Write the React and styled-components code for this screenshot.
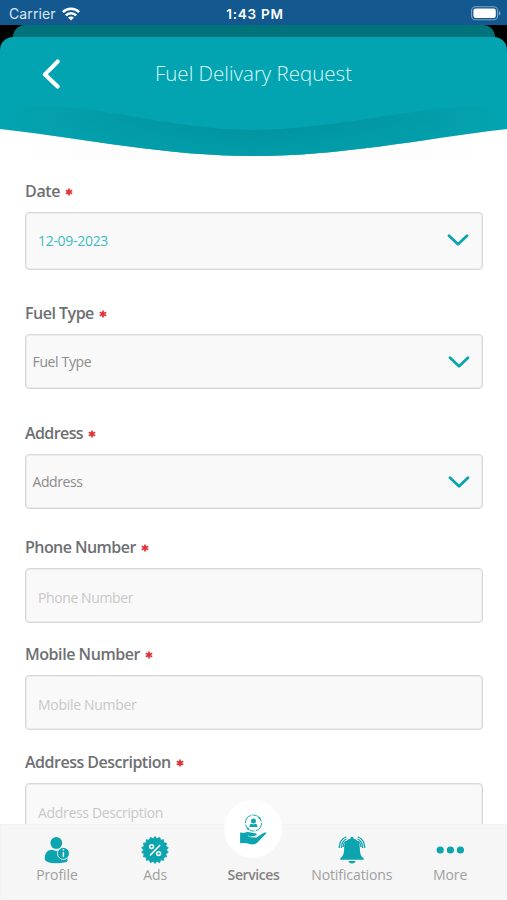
import React from 'react';
import styled, { createGlobalStyle } from 'styled-components';

const FIELDS = [
  { label: 'Date', value: '12-09-2023', kind: 'date', height: 58, gap: 33, spacing: -0.35, valueSpacing: -0.3 },
  { label: 'Fuel Type', value: 'Fuel Type', kind: 'select', height: 55, gap: 34, spacing: -0.5, valueSpacing: -0.35 },
  { label: 'Address', value: 'Address', kind: 'select', height: 55, gap: 28, spacing: -0.6, valueSpacing: -0.4 },
  { label: 'Phone Number', value: 'Phone Number', kind: 'input', height: 55, gap: 21, spacing: -0.55, valueSpacing: -0.4 },
  { label: 'Mobile Number', value: 'Mobile Number', kind: 'input', height: 55, gap: 22, spacing: -0.45, valueSpacing: -0.3 },
  { label: 'Address Description', value: 'Address Description', kind: 'input', height: 55, gap: 0, spacing: -0.5, valueSpacing: -0.33 },
];

export default function App() {
  return (
    <Screen>
      <GlobalStyle />
      <StatusBar />
      <Header />
      <Form>
        {FIELDS.map((field) => (
          <FormField key={field.label} {...field} />
        ))}
      </Form>
      <TabBar />
    </Screen>
  );
}

const StatusBar = () => (
  <StatusWrap>
    <Carrier>
      Carrier
      <svg width="18" height="14" viewBox="0 0 18 14" fill="none" stroke="#fff" strokeWidth="2.5">
        <path d="M0.9 5.2C5.4 0.7 12.6 0.7 17.1 5.2" />
        <path d="M3.8 8.3C6.8 5.4 11.2 5.4 14.2 8.3" />
        <path d="M9 13.6L6 10.6C7.6 9 10.4 9 12 10.6Z" fill="#fff" stroke="none" />
      </svg>
    </Carrier>
    <Clock>1:43 PM</Clock>
    <Battery>
      <svg width="30" height="15" viewBox="0 0 30 15">
        <rect x="0.6" y="0.8" width="26" height="13" rx="3.8" fill="none" stroke="#7fa3c5" strokeWidth="1.1" />
        <rect x="2.4" y="2.6" width="22.4" height="9.4" rx="2.2" fill="#fff" />
        <path d="M27.9 5.1Q29.5 5.7 29.5 7.3T27.9 9.5Z" fill="#7fa3c5" />
      </svg>
    </Battery>
  </StatusWrap>
);

const Header = () => (
  <HeaderWrap>
    <BackCard />
    <FrontCard>
      <TitleRow>
        <BackButton aria-label="Back">
          <svg width="18" height="31" viewBox="0 0 18 31" fill="none" stroke="#fff" strokeWidth="4.2" strokeLinecap="round" strokeLinejoin="round">
            <path d="M15.6 2.6L3 15.4L15.6 27.6" />
          </svg>
        </BackButton>
        <Title>Fuel Delivary Request</Title>
      </TitleRow>
      <svg width="507" height="66" viewBox="0 99 507 66" preserveAspectRatio="none">
        <defs>
          <linearGradient id="band" x1="0" y1="0" x2="1" y2="0">
            <stop offset="0" stopColor="#008a96" stopOpacity="0" />
            <stop offset="0.22" stopColor="#008a96" stopOpacity="0.35" />
            <stop offset="0.5" stopColor="#008a96" stopOpacity="0.75" />
            <stop offset="0.78" stopColor="#008a96" stopOpacity="0.4" />
            <stop offset="1" stopColor="#008a96" stopOpacity="0" />
          </linearGradient>
          <linearGradient id="lift" x1="0" y1="0" x2="0" y2="1">
            <stop offset="0.35" stopColor="#03a4b1" stopOpacity="0" />
            <stop offset="1" stopColor="#03a4b1" stopOpacity="0.6" />
          </linearGradient>
          <linearGradient id="haze" x1="0" y1="0" x2="1" y2="0">
            <stop offset="0" stopColor="#fff" />
            <stop offset="0.3" stopColor="#fcfcfc" />
            <stop offset="0.7" stopColor="#fcfcfc" />
            <stop offset="1" stopColor="#fff" />
          </linearGradient>
        </defs>
        <rect x="0" y="128" width="507" height="32" fill="url(#haze)" />
        <path d="M0 99H507V129C415 140 340 156 254 156C165 156 90 139 0 129Z" fill="#03a4b1" />
        <path d="M20 105C110 105 165 129 254 130C340 129 400 108 487 106L507 129C415 140 340 156 254 156C165 156 90 139 0 129Z" fill="url(#band)" />
        <path d="M20 105C110 105 165 129 254 130C340 129 400 108 487 106L507 129C415 140 340 156 254 156C165 156 90 139 0 129Z" fill="url(#lift)" />
      </svg>
    </FrontCard>
  </HeaderWrap>
);

const FormField = ({ label, value, kind, height, gap, spacing, valueSpacing }) => (
  <Field $gap={gap}>
    <Label $spacing={spacing}>
      {label}
      <Required />
    </Label>
    <Control $kind={kind} $height={height} $spacing={valueSpacing}>
      <span>{value}</span>
      {kind !== 'input' && (
        <svg width="22" height="14" viewBox="0 0 22 14" fill="none" stroke="#0ba4af" strokeWidth="2.8" strokeLinecap="round" strokeLinejoin="round">
          <path d="M2 2.7L11 11.3L20 2.7" />
        </svg>
      )}
    </Control>
  </Field>
);

const Required = () => (
  <svg width="8" height="8" viewBox="0 0 8 8" stroke="#dc3238" strokeWidth="1.7">
    <path d="M4 0.5V7.5M0.8 2.2L7.2 5.8M7.2 2.2L0.8 5.8" />
  </svg>
);

const ProfileIcon = () => (
  <svg width="26" height="28" viewBox="0 0 26 28">
    <circle cx="12.3" cy="7" r="5.9" fill="#0ba4af" />
    <path d="M0.8 23.5C0.5 16.5 4 13.8 8 13.8Q12.2 16 16.4 13.8C21 13.8 24 17 23.5 25Q22 27 12 27.3Q2 27 0.8 23.5Z" fill="#0ba4af" />
    <circle cx="19.4" cy="17.4" r="6" fill="#0ba4af" stroke="#f6f6f6" strokeWidth="0.9" />
    <path d="M19.4 16V21M19.4 13V14.6" stroke="#f6f6f6" strokeWidth="1.5" />
  </svg>
);

// scalloped edge of the discount badge
const badgePoints = Array.from({ length: 36 }, (_, i) => {
  const angle = (i * Math.PI) / 18;
  const radius = i % 2 ? 11.4 : 13.5;
  return `${(14 + radius * Math.sin(angle)).toFixed(2)},${(14 - radius * Math.cos(angle)).toFixed(2)}`;
}).join(' ');

const AdsIcon = () => (
  <svg width="28" height="28" viewBox="0 0 28 28" fill="none" stroke="#f6f6f6" strokeWidth="1.6">
    <polygon points={badgePoints} fill="#0ba4af" stroke="#0ba4af" strokeWidth="0.8" strokeLinejoin="round" />
    <circle cx="10.6" cy="10.6" r="1.9" />
    <circle cx="17.6" cy="17.6" r="1.9" />
    <path d="M19.2 9L9 19.4" />
  </svg>
);

const ServicesIcon = () => (
  <svg width="28" height="32" viewBox="0 0 30 34" fill="#0ba4af">
    <circle cx="15.5" cy="9.6" r="8.6" fill="none" stroke="#0ba4af" strokeWidth="1" strokeDasharray="11 1.2 13 1.5" />
    <circle cx="21.9" cy="4.2" r="1.2" />
    <circle cx="9.5" cy="15.4" r="1.2" />
    <circle cx="15.5" cy="7.4" r="2.7" />
    <path d="M11.2 13.9Q11.2 10.5 13.6 10.3L15.5 11.2L17.4 10.3Q19.8 10.5 19.8 13.9Z" />
    <path d="M1.2 19.7L5.5 20.2Q8.5 18.8 11.3 19.5L18.2 20.7Q19.5 21.2 18.8 22.6L12 24.6L18.8 24.7L26.7 20Q29.2 19 29.4 20.5L19.2 30.9Q15 33.5 10.5 31.8Q7 30.4 1.2 31.2Z" />
    <path d="M9.4 22.8L12.2 24.6L18.6 24.6L22 22.1" fill="none" stroke="#fff" strokeWidth="0.6" />
  </svg>
);

const BellIcon = () => (
  <svg width="28" height="28" viewBox="0 0 28 28" fill="#0ba4af">
    <path d="M14 0.8Q15.6 0.8 15.7 2.8C20.8 4 21.9 8 21.9 12.5C21.9 18 23 20.3 25.7 22.3V23.8H2.3V22.3C5 20.3 6.1 18 6.1 12.5C6.1 8 7.2 4 12.3 2.8Q12.4 0.8 14 0.8Z" />
    <path d="M10.3 24.9H17.7Q16.8 27.6 14 27.6T10.3 24.9Z" />
    <g fill="none" stroke="#0ba4af" strokeWidth="1.2">
      <path d="M8.2 0.8Q1.6 3.3 1.2 12M8.7 2.8Q3.6 4.9 3.3 12M8.2 5Q5.4 6.5 5.2 11" />
      <path d="M19.8 0.8Q26.4 3.3 26.8 12M19.3 2.8Q24.4 4.9 24.7 12M19.8 5Q22.6 6.5 22.8 11" />
    </g>
  </svg>
);

const MoreIcon = () => (
  <svg width="28" height="28" viewBox="0 0 28 28" fill="#0ba4af">
    <circle cx="4.2" cy="14" r="3.6" />
    <circle cx="14.4" cy="14" r="3.6" />
    <circle cx="24.4" cy="14" r="3.6" />
  </svg>
);

const TabBar = () => (
  <TabWrap>
    <Tab><ProfileIcon /><TabText>Profile</TabText></Tab>
    <Tab><AdsIcon /><TabText>Ads</TabText></Tab>
    <Tab>
      <Bubble><ServicesIcon /></Bubble>
      <TabText $active>Services</TabText>
    </Tab>
    <Tab><BellIcon /><TabText>Notifications</TabText></Tab>
    <Tab><MoreIcon /><TabText>More</TabText></Tab>
  </TabWrap>
);

const GlobalStyle = createGlobalStyle`
  body {
    margin: 0;
    background: #fff;
  }
  * {
    box-sizing: border-box;
  }
  svg {
    display: block;
    flex: none;
  }
`;

const Screen = styled.div`
  width: 507px;
  height: 900px;
  display: flex;
  flex-direction: column;
  overflow: hidden;
  background: #fff;
  font-family: 'Open Sans', 'Noto Sans', sans-serif;
`;

const StatusWrap = styled.div`
  flex: none;
  display: grid;
  grid-template-columns: 1fr auto 1fr;
  align-items: center;
  height: 25px;
  padding: 2px 6px 0 9px;
  background: #13588f;
  color: #fff;
  font-family: Inter, Roboto, sans-serif;
  font-size: 14px;
`;

const Carrier = styled.div`
  display: flex;
  align-items: center;
  gap: 6px;
  color: #dbe7f2;
  letter-spacing: 0.1px;
`;

const Clock = styled.div`
  font-size: 13.5px;
  font-weight: 600;
  letter-spacing: 0.75px;
`;

const Battery = styled.div`
  display: flex;
  justify-content: flex-end;
`;

const HeaderWrap = styled.div`
  flex: none;
  height: 140px;
  background: linear-gradient(#000 30px, #fff 30px);
`;

const BackCard = styled.div`
  height: 12px;
  margin: 0 12px 0 13px;
  border-radius: 12px 12px 0 0;
  background: #00737b;
`;

const FrontCard = styled.div`
  border-radius: 13px 13px 0 0;
  overflow: hidden;
  background: linear-gradient(#03a4b1 64px, #fff 64px);
`;

const TitleRow = styled.div`
  height: 62px;
  display: grid;
  grid-template-columns: 60px 1fr 60px;
  align-items: center;
  padding-top: 10px;
`;

const BackButton = styled.button`
  justify-self: end;
  border: 0;
  padding: 2px 0 0;
  background: none;
`;

const Title = styled.h1`
  margin: 0;
  text-align: center;
  font-size: 20.5px;
  line-height: 28px;
  font-weight: 350;
  color: #d8f8fa;
  letter-spacing: 0;
`;

const Form = styled.form`
  flex: 1;
  min-height: 0;
  overflow: hidden;
  padding: 16px 24px 0 25px;
`;

const Field = styled.div`
  margin-bottom: ${(p) => p.$gap}px;
`;

const Label = styled.label`
  display: flex;
  align-items: center;
  gap: 5px;
  height: 21px;
  padding-bottom: 1px;
  margin-bottom: 10px;
  font-size: 16px;
  font-weight: 600;
  color: #6d6f72;
  letter-spacing: ${(p) => p.$spacing}px;

  svg {
    margin-top: 2px;
  }
`;

const textColors = { date: '#3dbbc4', select: '#8c8c8c', input: '#c8c8c8' };
const textPadding = { date: '0 13px 2px 12px', select: '0 12px 0 6.5px', input: '4px 12px 0 12px' };

const Control = styled.div`
  display: flex;
  align-items: center;
  justify-content: space-between;
  height: ${(p) => p.$height}px;
  padding: ${(p) => textPadding[p.$kind]};
  border: 1px solid #d8d8d8;
  border-radius: 4px;
  box-shadow: inset 0 0 0 1px #ececec;
  background: #f9f9f9;
  color: ${(p) => textColors[p.$kind]};
  font-size: 14px;
  letter-spacing: ${(p) => p.$spacing}px;
`;

const TabWrap = styled.nav`
  flex: none;
  display: grid;
  grid-template-columns: repeat(5, 98.3px);
  justify-content: center;
  height: 76px;
  border: 1px solid #f3f3f3;
  background: #f6f6f6;
`;

const Tab = styled.div`
  position: relative;
  display: flex;
  flex-direction: column;
  align-items: center;
  justify-content: flex-end;
  gap: 1px;
  padding-bottom: 14px;
`;

const Bubble = styled.div`
  position: absolute;
  top: -25px;
  display: grid;
  place-items: center;
  width: 58px;
  height: 58px;
  padding-top: 1px;
  border-radius: 50%;
  background: #fff;
`;

const TabText = styled.span`
  font-size: 14px;
  line-height: 20px;
  font-weight: ${(p) => (p.$active ? 600 : 400)};
  color: ${(p) => (p.$active ? '#828282' : '#a0a0a0')};
  letter-spacing: ${(p) => (p.$active ? '-0.4px' : '-0.1px')};
`;
